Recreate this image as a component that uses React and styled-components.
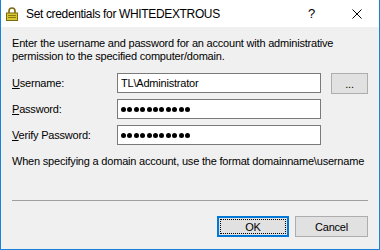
import React from "react";
import styled, { createGlobalStyle } from "styled-components";

const Global = createGlobalStyle`
  html, body {
    margin: 0;
    padding: 0;
    background: #ffffff;
  }
`;

const Ventana = styled.div`
  width: 380px;
  height: 250px;
  box-sizing: border-box;
  border: 1px solid #1883d7;
  border-top: 0;
  display: flex;
  flex-direction: column;
  font-family: "Liberation Sans", Arial, sans-serif;
  font-size: 11px;
  letter-spacing: -0.2px;
  color: #000;
  overflow: hidden;
`;

const BarraTitulo = styled.div`
  height: 27px;
  flex: none;
  background: #fff;
  display: flex;
  align-items: center;
  padding-left: 5px;
`;

const TextoTitulo = styled.div`
  margin-left: 8px;
  font-family: "Liberation Sans", Arial, sans-serif;
  font-size: 12px;
  letter-spacing: -0.35px;
  color: #000;
  flex: 1;
`;

const BotonTitulo = styled.div`
  width: ${props => props.ancho || 45}px;
  height: 27px;
  display: flex;
  align-items: center;
  justify-content: center;
  font-family: "Liberation Sans", sans-serif;
  font-size: 13px;
`;

const Cuerpo = styled.div`
  flex: 1;
  background: #f0f0f0;
  padding: 10px 11px 0 11px;
  display: flex;
  flex-direction: column;
`;

const Parrafo = styled.div`
  line-height: 13px;
  white-space: nowrap;
  margin-top: ${props => props.arriba || 0}px;
`;

const Formulario = styled.div`
  margin-top: 10px;
  display: flex;
  flex-direction: column;
  gap: 6px;
`;

const Fila = styled.div`
  display: flex;
  align-items: flex-start;
  height: 20px;
`;

const Etiqueta = styled.div`
  width: 105px;
  line-height: 20px;
  u {
    text-decoration: underline;
    text-underline-offset: 1px;
  }
`;

const Campo = styled.div`
  width: 204px;
  height: 20px;
  box-sizing: border-box;
  border: 1px solid #7a7a7a;
  background: #fff;
  display: flex;
  align-items: center;
  padding-left: 3px;
  gap: 1.4px;
`;

const Punto = styled.span`
  width: 5px;
  height: 5px;
  border-radius: 50%;
  background: #000;
  flex: none;
`;

const Boton = styled.div`
  box-sizing: border-box;
  width: ${props => props.ancho}px;
  height: 21px;
  background: #e1e1e1;
  border: ${props => (props.foco ? "2px solid #0078d7" : "1px solid #adadad")};
  display: flex;
  align-items: center;
  justify-content: center;
  margin-left: ${props => props.izq || 0}px;
  position: relative;
  &::after {
    content: "";
    display: ${props => (props.foco ? "block" : "none")};
    position: absolute;
    inset: 1px;
    border: 1px dotted #000;
  }
`;

const Separador = styled.div`
  margin-top: 32px;
  height: 1px;
  background: #a0a0a0;
`;

const PieBotones = styled.div`
  margin-top: 15px;
  display: flex;
  justify-content: flex-end;
`;

const Candado = () => (
  <svg width="12" height="14" viewBox="0 0 12 14">
    <path d="M3 6 V4 a3 3 0 0 1 6 0 V6" fill="none" stroke="#7a6a10" strokeWidth="1.6" />
    <rect x="0.5" y="6" width="11" height="7.5" fill="#d8c832" stroke="#7a6a10" />
    <line x1="2" y1="8.5" x2="10" y2="8.5" stroke="#8a7a10" />
    <line x1="2" y1="10.5" x2="10" y2="10.5" stroke="#8a7a10" />
  </svg>
);

const Cerrar = () => (
  <svg width="10" height="10" viewBox="0 0 10 10">
    <path d="M0.5 0.5 L9.5 9.5 M9.5 0.5 L0.5 9.5" stroke="#000" strokeWidth="1" />
  </svg>
);

const Clave = () => (
  <Campo>
    {Array.from({ length: 11 }).map((_, i) => (
      <Punto key={i} />
    ))}
  </Campo>
);

export default function App() {
  return (
    <>
      <Global />
      <Ventana>
        <BarraTitulo>
          <Candado />
          <TextoTitulo>Set credentials for WHITEDEXTROUS</TextoTitulo>
          <BotonTitulo ancho={45}>?</BotonTitulo>
          <BotonTitulo ancho={45}>
            <Cerrar />
          </BotonTitulo>
        </BarraTitulo>
        <Cuerpo>
          <Parrafo>
            Enter the username and password for an account with administrative
            <br />
            permission to the specified computer/domain.
          </Parrafo>
          <Formulario>
            <Fila>
              <Etiqueta>
                <u>U</u>sername:
              </Etiqueta>
              <Campo>TL\Administrator</Campo>
              <Boton ancho={37} izq={10}>...</Boton>
            </Fila>
            <Fila>
              <Etiqueta>
                <u>P</u>assword:
              </Etiqueta>
              <Clave />
            </Fila>
            <Fila>
              <Etiqueta>
                <u>V</u>erify Password:
              </Etiqueta>
              <Clave />
            </Fila>
          </Formulario>
          <Parrafo arriba={10}>
            When specifying a domain account, use the format domainname\username
          </Parrafo>
          <Separador />
          <PieBotones>
            <Boton ancho={72} foco>OK</Boton>
            <Boton ancho={73} izq={6}>Cancel</Boton>
          </PieBotones>
        </Cuerpo>
      </Ventana>
    </>
  );
}
